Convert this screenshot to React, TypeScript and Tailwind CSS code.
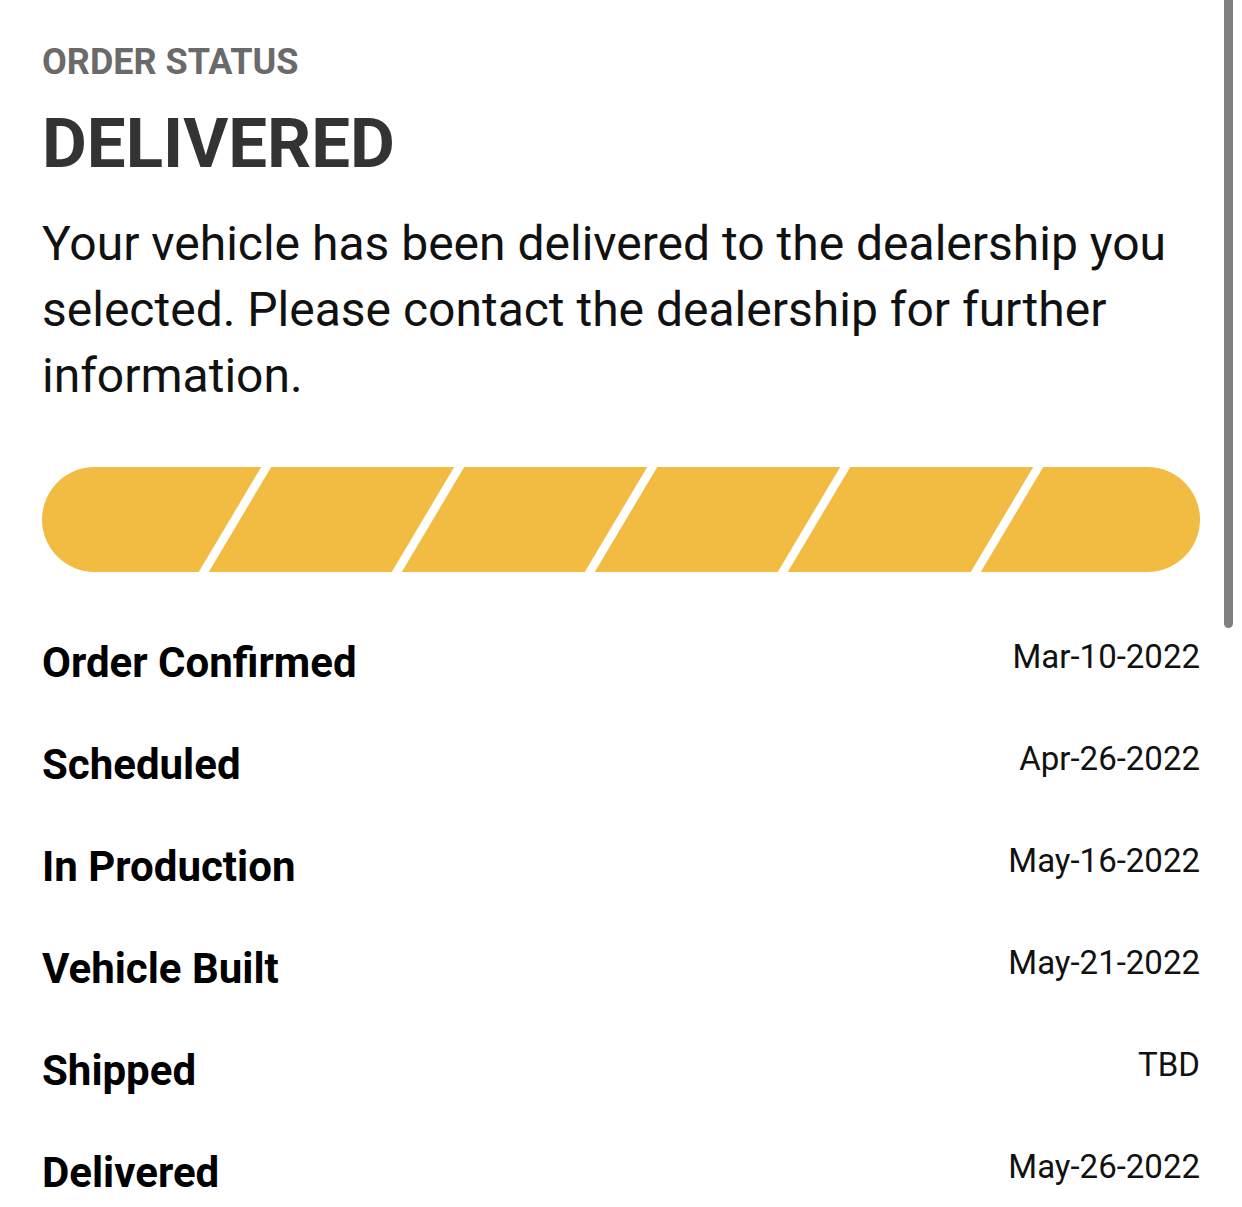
import React from 'react';

const steps = [
  { label: 'Order Confirmed', date: 'Mar-10-2022' },
  { label: 'Scheduled', date: 'Apr-26-2022' },
  { label: 'In Production', date: 'May-16-2022' },
  { label: 'Vehicle Built', date: 'May-21-2022' },
  { label: 'Shipped', date: 'TBD' },
  { label: 'Delivered', date: 'May-26-2022' },
];

const StripedProgress: React.FC<{ segments: number }> = ({ segments }) => {
  const w = 1158;
  const h = 105;
  const step = w / segments;
  return (
    <svg viewBox={`0 0 ${w} ${h}`} className="block w-full h-[105px]">
      <defs>
        <clipPath id="pill">
          <rect x="0" y="0" width={w} height={h} rx={h / 2} />
        </clipPath>
      </defs>
      <g clipPath="url(#pill)">
        <rect x="0" y="0" width={w} height={h} fill="#f2bc42" />
        {Array.from({ length: segments - 1 }).map((_, i) => {
          const cx = step * (i + 1);
          return (
            <line
              key={i}
              x1={cx - 36}
              y1={h + 8}
              x2={cx + 36}
              y2={-8}
              stroke="#ffffff"
              strokeWidth={8.6}
            />
          );
        })}
      </g>
    </svg>
  );
};

export default function App() {
  return (
    <div className="relative min-h-[1207px] w-full bg-white font-['Roboto',sans-serif] overflow-hidden">
      <div className="pl-[42px] pr-[42px] pt-[42px]">
        <h2 className="text-[36px] leading-[40px] font-bold text-[#6a6a6a]">ORDER STATUS</h2>
        <h1 className="mt-[22px] text-[69px] leading-[80px] font-bold text-[#333333]">DELIVERED</h1>
        <p className="mt-[27px] text-[48px] leading-[66px] text-[#111111]">
          Your vehicle has been delivered to the dealership you selected. Please contact the dealership for
          further information.
        </p>

        <div className="mt-[58px]">
          <StripedProgress segments={6} />
        </div>

        <div className="mt-[65px] flex flex-col gap-[50px]">
          {steps.map((s) => (
            <div key={s.label} className="flex items-start justify-between">
              <span className="text-[42px] leading-[52px] font-bold text-black">{s.label}</span>
              <span className="text-[33px] leading-[40px] text-[#111111]">{s.date}</span>
            </div>
          ))}
        </div>
      </div>

      {/* overlay scrollbar */}
      <div className="absolute top-0 right-[9px] w-[9px] h-[628px] rounded-b-full bg-[#808080]" />
    </div>
  );
}
